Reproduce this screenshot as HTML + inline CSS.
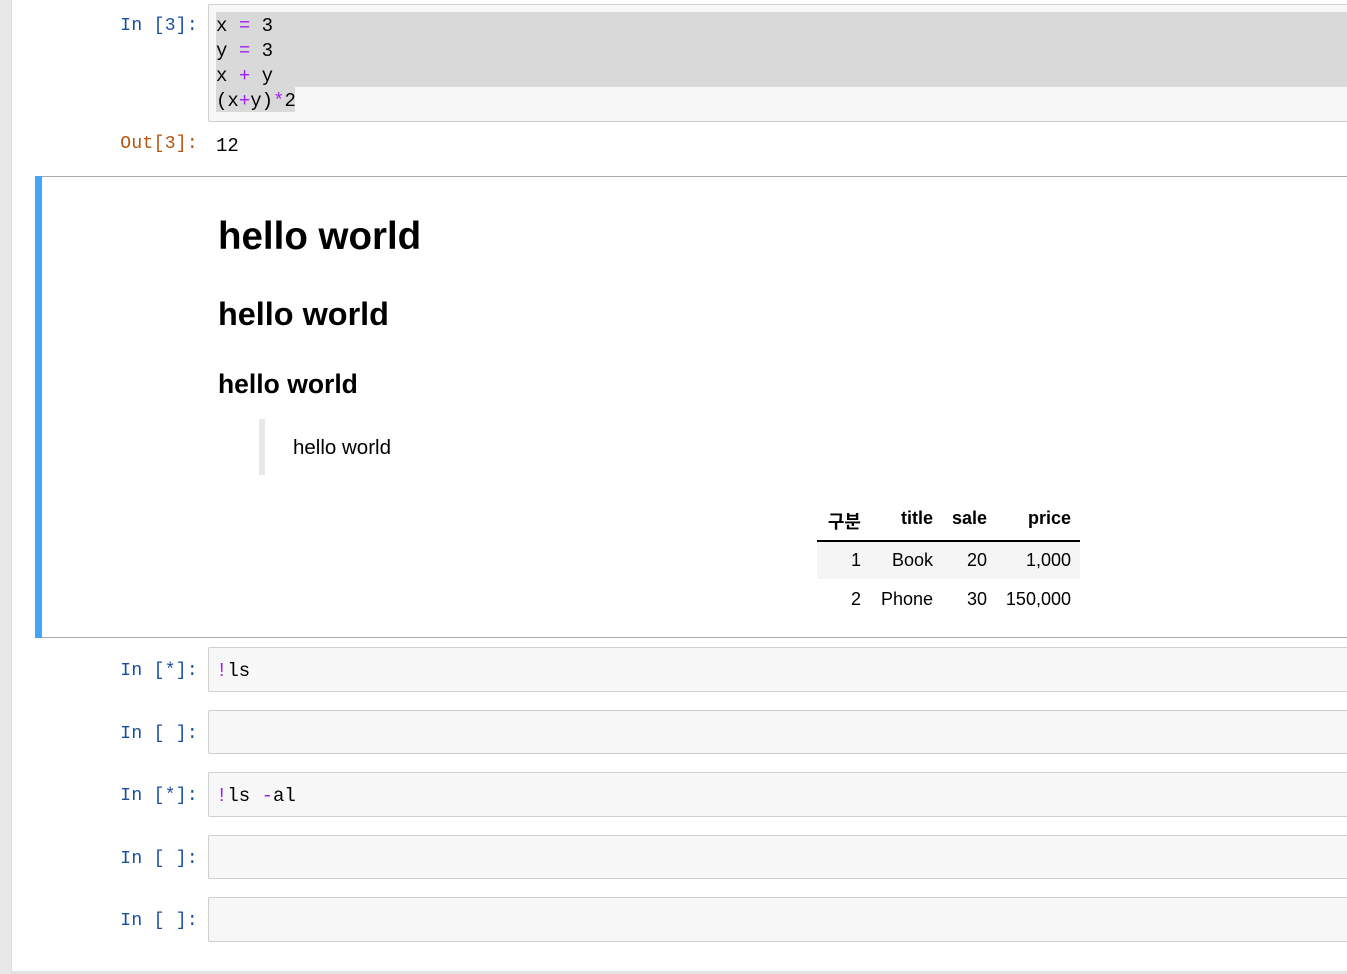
<!DOCTYPE html>
<html><head><meta charset="utf-8"><style>
body{margin:0;width:1347px;height:974px;position:relative;overflow:hidden;background:#fff;font-family:"Liberation Sans","Noto Sans CJK KR",sans-serif;}
.strip{position:absolute;left:0;top:0;width:11px;height:974px;background:#e8e8e8;border-right:1px solid #ddd;}
.bottom{position:absolute;left:12px;top:971px;width:1335px;height:3px;background:#e4e4e4;}
.p{position:absolute;font-family:"Liberation Mono",monospace;font-size:18px;color:#1a4fa0;text-align:right;width:198px;left:0;white-space:pre;letter-spacing:0.3px;}
.out{color:#b5540f;}
.box{position:absolute;left:208px;width:1150px;background:#f7f7f7;border:1px solid #cfcfcf;border-radius:2px;box-sizing:border-box;}
.code{position:absolute;font-family:"Liberation Mono",monospace;font-size:19px;color:#000;white-space:pre;line-height:25px;}
.m{color:#a020f0;}
.h{position:absolute;font-weight:bold;color:#000;left:218px;white-space:nowrap;}
</style></head><body>
<div class="strip"></div>
<div class="bottom"></div>

<div class="p" style="top:16px">In [3]:</div>
<div class="box" style="top:4px;height:118px"></div>
<div style="position:absolute;left:216px;top:12px;width:1131px;height:75px;background:#d9d9d9"></div>
<div style="position:absolute;left:216px;top:87px;width:79px;height:25px;background:#d9d9d9"></div>
<div class="code" style="left:216px;top:14px">x <span class="m">=</span> 3
y <span class="m">=</span> 3
x <span class="m">+</span> y
(x<span class="m">+</span>y)<span class="m">*</span>2</div>

<div class="p out" style="top:134px">Out[3]:</div>
<div class="code" style="left:216px;top:134px">12</div>

<div style="position:absolute;left:35px;top:176px;width:1312px;height:1px;background:#aaa"></div>
<div style="position:absolute;left:35px;top:637px;width:1312px;height:1px;background:#aaa"></div>
<div style="position:absolute;left:35px;top:176px;width:7px;height:462px;background:#42a5f5"></div>

<div class="h" style="top:215px;font-size:38.5px">hello world</div>
<div class="h" style="top:296px;font-size:32.4px">hello world</div>
<div class="h" style="top:369px;font-size:26.5px">hello world</div>
<div style="position:absolute;left:259px;top:419px;width:6px;height:56px;background:#e8e8e8"></div>
<div style="position:absolute;left:293px;top:436px;font-size:20.5px;color:#000">hello world</div>

<div style="position:absolute;left:817px;top:540px;width:263px;height:2px;background:#000"></div>
<div style="position:absolute;left:817px;top:542px;width:263px;height:37px;background:#f5f5f5"></div>
<div style="position:absolute;font-size:18px;color:#000;top:508px;left:817px;width:263px;height:130px">
 <div style="position:absolute;right:219px;font-weight:bold">구분</div>
 <div style="position:absolute;right:147px;font-weight:bold">title</div>
 <div style="position:absolute;right:93px;font-weight:bold">sale</div>
 <div style="position:absolute;right:9px;font-weight:bold">price</div>
 <div style="position:absolute;right:219px;top:42px">1</div>
 <div style="position:absolute;right:147px;top:42px">Book</div>
 <div style="position:absolute;right:93px;top:42px">20</div>
 <div style="position:absolute;right:9px;top:42px">1,000</div>
 <div style="position:absolute;right:219px;top:81px">2</div>
 <div style="position:absolute;right:147px;top:81px">Phone</div>
 <div style="position:absolute;right:93px;top:81px">30</div>
 <div style="position:absolute;right:9px;top:81px">150,000</div>
</div>

<div class="p" style="top:661px">In [*]:</div>
<div class="box" style="top:647px;height:45px"></div>
<div class="code" style="left:216px;top:659px"><span class="m">!</span>ls</div>

<div class="p" style="top:724px">In [ ]:</div>
<div class="box" style="top:710px;height:44px"></div>

<div class="p" style="top:786px">In [*]:</div>
<div class="box" style="top:772px;height:45px"></div>
<div class="code" style="left:216px;top:784px"><span class="m">!</span>ls <span class="m">-</span>al</div>

<div class="p" style="top:849px">In [ ]:</div>
<div class="box" style="top:835px;height:44px"></div>

<div class="p" style="top:911px">In [ ]:</div>
<div class="box" style="top:897px;height:45px"></div>
</body></html>
